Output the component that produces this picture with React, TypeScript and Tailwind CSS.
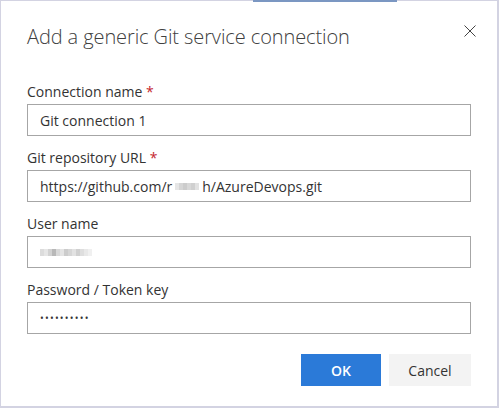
import React from 'react';

// Form fields of the dialog
interface Field {
  label: string;
  required?: boolean;
  kind: 'text' | 'url' | 'user' | 'password';
}

const FIELDS: Field[] = [
  { label: 'Connection name', required: true, kind: 'text' },
  { label: 'Git repository URL', required: true, kind: 'url' },
  { label: 'User name', kind: 'user' },
  { label: 'Password / Token key', kind: 'password' },
];

// Pixelated "redacted" blob, like the blurred parts of the screenshot
function Redacted({ shades, className }: { shades: string[]; className?: string }) {
  return (
    <span className={`inline-flex items-center align-middle ${className ?? ''}`}>
      {shades.map((c, i) => (
        <span key={i} className="inline-block w-[4px] h-[7px]" style={{ backgroundColor: c }} />
      ))}
    </span>
  );
}

function FieldValue({ kind }: { kind: Field['kind'] }) {
  switch (kind) {
    case 'text':
      return <span>Git connection 1</span>;
    case 'url':
      return (
        <span className="flex items-center">
          https://github.com/r
          <Redacted
            className="mx-[3px]"
            shades={['#e6e6e6', '#d6d6d6', '#cccccc', '#d8d8d8', '#d0d0d0', '#e2e2e2']}
          />
          h/AzureDevops.git
        </span>
      );
    case 'user':
      return (
        <Redacted
          className="mt-[1px]"
          shades={['#dcdcdc', '#e6e6e6', '#d2d2d2', '#b8b8b8', '#d8d8d8', '#e4e4e4', '#cccccc', '#d6d6d6', '#e2e2e2', '#d0d0d0', '#dedede', '#e8e8e8', '#f0f0f0']}
        />
      );
    case 'password':
      return <span className="text-[10px] tracking-[1.2px] text-[#333]">••••••••••</span>;
  }
}

function FormField({ field }: { field: Field }) {
  return (
    <div className="flex flex-col">
      <label className="text-[14px] leading-[20px] text-[#333] mb-[2px]">
        {field.label}
        {field.required && <span className="text-[#c4262e]"> *</span>}
      </label>
      <div className="h-[32px] border border-[#a6a6a6] bg-white px-[12px] flex items-center text-[14px] text-[#333]">
        <FieldValue kind={field.kind} />
      </div>
    </div>
  );
}

export default function App() {
  return (
    <div
      className="relative w-[499px] h-[408px] bg-white border-l border-t border-r-2 border-b-2 border-[#d3d3e2] flex flex-col"
      style={{ fontFamily: '"Segoe UI", "Open Sans", "Noto Sans", sans-serif' }}
    >
      {/* strip of the page behind the dialog */}
      <div className="absolute top-[-1px] left-[252px] w-[144px] h-[2px] bg-[#7b97c2]" />

      <div className="flex items-start justify-between pl-[26px] pr-[20px] pt-[22px]">
        <h1 className="text-[20px] leading-[28px] font-light text-[#404040] tracking-[-0.1px]">
          Add a generic Git service connection
        </h1>
        <button className="mt-[1px] w-[14px] h-[14px] flex items-center justify-center text-[#444]">
          <svg width="12" height="12" viewBox="0 0 12 12" fill="none" stroke="currentColor" strokeWidth="1">
            <path d="M0.5 0.5 L11.5 11.5 M11.5 0.5 L0.5 11.5" />
          </svg>
        </button>
      </div>

      <div className="flex flex-col gap-[12px] px-[26px] mt-[31px]">
        {FIELDS.map((f) => (
          <FormField key={f.label} field={f} />
        ))}
      </div>

      <div className="flex justify-end gap-[8px] px-[26px] mt-[20px]">
        <button className="w-[80px] h-[32px] bg-[#2b7ad8] text-white text-[14px] font-semibold">OK</button>
        <button className="w-[82px] h-[32px] bg-[#f3f3f3] text-[#333] text-[14px]">Cancel</button>
      </div>
    </div>
  );
}
